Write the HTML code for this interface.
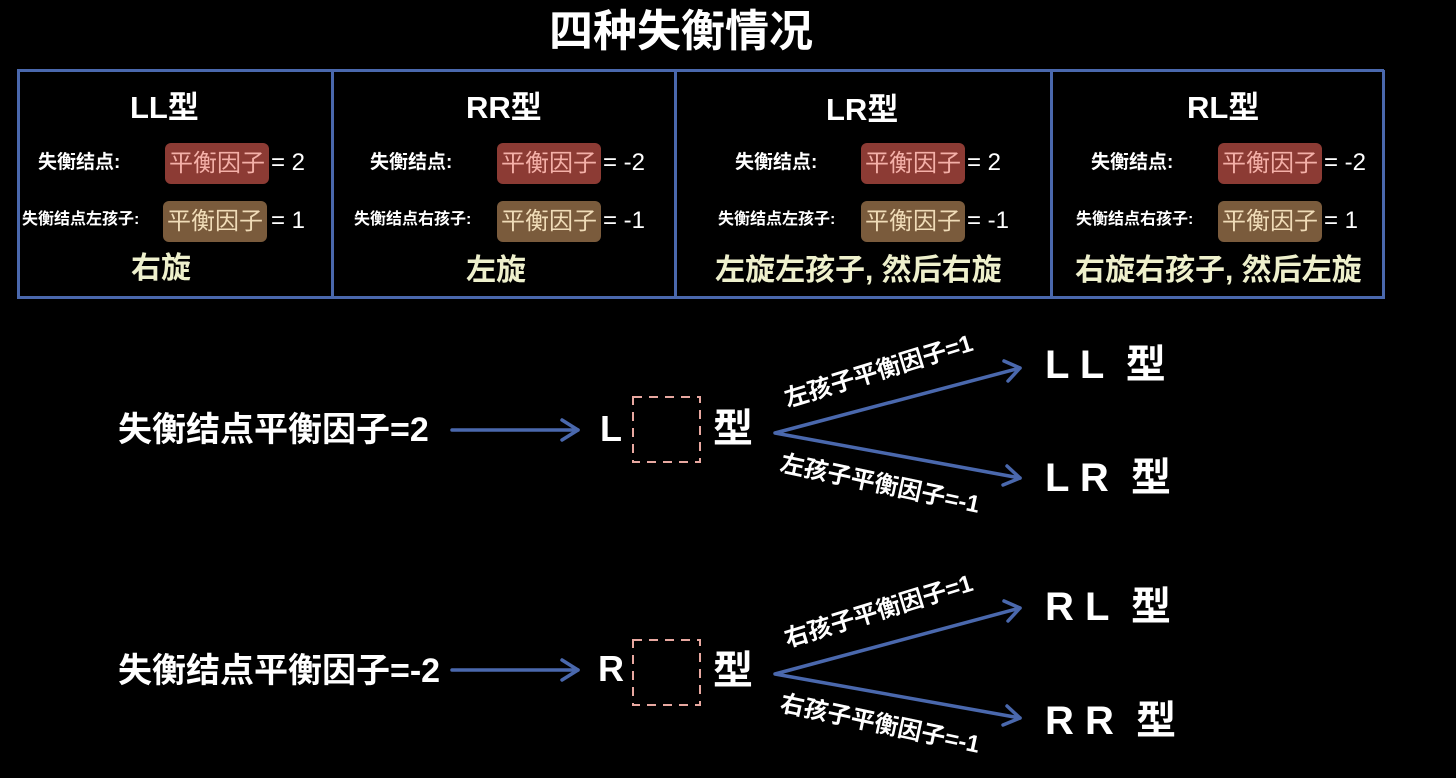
<!DOCTYPE html>
<html><head><meta charset="utf-8"><style>
body{margin:0;width:1456px;height:778px;background:#000;overflow:hidden;position:relative;font-family:"Liberation Sans","Noto Sans CJK SC",sans-serif;color:#fff}
.a{position:absolute;white-space:nowrap;line-height:1}
.b{font-weight:bold}
.red{position:absolute;background:#8c3b34;border-radius:6px;color:#f4b0a8;font-size:24px;text-align:center;line-height:41px;height:41px;width:104px}
.brn{position:absolute;background:#7a5b3c;border-radius:6px;color:#f0dcb8;font-size:24px;text-align:center;line-height:41px;height:41px;width:104px}
.rot{color:#eef0cc;font-size:30px;font-weight:bold}
.eq{font-size:24px}
.v{position:absolute;top:70px;width:3px;height:229px;background:#4a68ad}
</style></head><body>
<div class="a b" style="left:549px;top:10px;font-size:44px">四种失衡情况</div>
<div style="position:absolute;left:17px;top:69px;width:1367px;height:3px;background:#4a68ad"></div>
<div style="position:absolute;left:17px;top:296px;width:1367px;height:3px;background:#4a68ad"></div>
<div class="v" style="left:17px"></div><div class="v" style="left:331px"></div><div class="v" style="left:674px"></div><div class="v" style="left:1050px"></div><div class="v" style="left:1382px"></div>

<div class="a b" style="left:130px;top:92px;font-size:31px">LL型</div>
<div class="a b" style="left:466px;top:92px;font-size:31px">RR型</div>
<div class="a b" style="left:826px;top:94px;font-size:31px">LR型</div>
<div class="a b" style="left:1187px;top:92px;font-size:31px">RL型</div>

<div class="a b" style="left:38px;top:153px;font-size:19px">失衡结点:</div>
<div class="red" style="left:165px;top:143px">平衡因子</div><div class="a eq" style="left:271px;top:151px">= 2</div>
<div class="a b" style="left:370px;top:153px;font-size:19px">失衡结点:</div>
<div class="red" style="left:497px;top:143px">平衡因子</div><div class="a eq" style="left:603px;top:151px">= -2</div>
<div class="a b" style="left:735px;top:153px;font-size:19px">失衡结点:</div>
<div class="red" style="left:861px;top:143px">平衡因子</div><div class="a eq" style="left:967px;top:151px">= 2</div>
<div class="a b" style="left:1091px;top:153px;font-size:19px">失衡结点:</div>
<div class="red" style="left:1218px;top:143px">平衡因子</div><div class="a eq" style="left:1324px;top:151px">= -2</div>

<div class="a b" style="left:22px;top:212px;font-size:16px">失衡结点左孩子:</div>
<div class="brn" style="left:163px;top:201px">平衡因子</div><div class="a eq" style="left:271px;top:209px">= 1</div>
<div class="a b" style="left:354px;top:212px;font-size:16px">失衡结点右孩子:</div>
<div class="brn" style="left:497px;top:201px">平衡因子</div><div class="a eq" style="left:603px;top:209px">= -1</div>
<div class="a b" style="left:718px;top:212px;font-size:16px">失衡结点左孩子:</div>
<div class="brn" style="left:861px;top:201px">平衡因子</div><div class="a eq" style="left:967px;top:209px">= -1</div>
<div class="a b" style="left:1076px;top:212px;font-size:16px">失衡结点右孩子:</div>
<div class="brn" style="left:1218px;top:201px">平衡因子</div><div class="a eq" style="left:1324px;top:209px">= 1</div>

<div class="a rot" style="left:131px;top:254px">右旋</div>
<div class="a rot" style="left:466px;top:256px">左旋</div>
<div class="a rot" style="left:715px;top:256px">左旋左孩子, 然后右旋</div>
<div class="a rot" style="left:1075px;top:256px">右旋右孩子, 然后左旋</div>

<svg style="position:absolute;left:0;top:0" width="1456" height="778">
<g stroke="#4a68ad" stroke-width="3.5" fill="none" stroke-linecap="round" stroke-linejoin="round">
<line x1="452" y1="430" x2="578" y2="430"/><polyline points="562,420 578,430 562,440"/>
<polyline points="1020,368 775,433 1020,478"/>
<polyline points="1004,361 1020,368 1008,381"/><polyline points="1007,466 1020,478 1003,485"/>
<line x1="452" y1="670" x2="578" y2="670"/><polyline points="562,660 578,670 562,680"/>
<polyline points="1020,608 775,674 1020,718"/>
<polyline points="1004,601 1020,608 1008,621"/><polyline points="1007,706 1020,718 1003,725"/>
</g>
<g stroke="#e8a8a0" stroke-width="2" fill="none" stroke-dasharray="9,7">
<rect x="633" y="397" width="67" height="65"/><rect x="633" y="640" width="67" height="65"/>
</g>
</svg>

<div class="a b" style="left:118px;top:413px;font-size:34px">失衡结点平衡因子=2</div>
<div class="a b" style="left:600px;top:411px;font-size:36px">L</div>
<div class="a b" style="left:713px;top:409px;font-size:40px">型</div>
<div class="a b" style="left:789px;top:388px;font-size:24px;transform:rotate(-17deg);transform-origin:0 100%">左孩子平衡因子=1</div>
<div class="a b" style="left:783px;top:452px;font-size:24px;transform:rotate(12deg);transform-origin:0 0">左孩子平衡因子=-1</div>
<div class="a b" style="left:1045px;top:345px;font-size:40px">L L &nbsp;型</div>
<div class="a b" style="left:1045px;top:458px;font-size:40px">L R &nbsp;型</div>

<div class="a b" style="left:118px;top:654px;font-size:34px">失衡结点平衡因子=-2</div>
<div class="a b" style="left:598px;top:651px;font-size:36px">R</div>
<div class="a b" style="left:713px;top:651px;font-size:40px">型</div>
<div class="a b" style="left:789px;top:628px;font-size:24px;transform:rotate(-17deg);transform-origin:0 100%">右孩子平衡因子=1</div>
<div class="a b" style="left:783px;top:692px;font-size:24px;transform:rotate(12deg);transform-origin:0 0">右孩子平衡因子=-1</div>
<div class="a b" style="left:1045px;top:587px;font-size:40px">R L &nbsp;型</div>
<div class="a b" style="left:1045px;top:701px;font-size:40px">R R &nbsp;型</div>
</body></html>
